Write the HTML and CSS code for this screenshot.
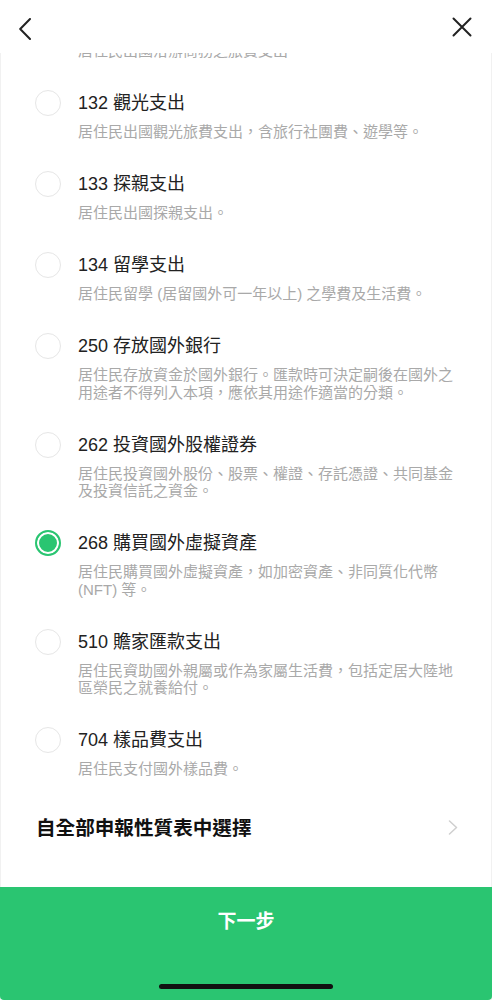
FILE: index.html
```html
<!DOCTYPE html>
<html lang="zh-Hant">
<head>
<meta charset="utf-8">
<title>申報性質</title>
<link rel="stylesheet" href="styles.css">
</head>
<body>
<div class="page">
  <header class="header">
    <svg class="icon-back" width="12" height="22" viewBox="0 0 12 22"><polyline points="11,1 1.2,11 11,21" fill="none" stroke="#222" stroke-width="2" stroke-linecap="round" stroke-linejoin="round"/></svg>
    <svg class="icon-close" width="20" height="20" viewBox="0 0 20 20"><path d="M1.5 1.5 L18.5 18.5 M18.5 1.5 L1.5 18.5" fill="none" stroke="#222" stroke-width="2" stroke-linecap="round"/></svg>
  </header>
  <main class="main">
    <div class="list">
      <p class="desc clipped">居住民出國洽辦商務之旅費支出</p>
      <div class="item">
        <span class="radio"></span>
        <div class="text">
          <div class="title">132 觀光支出</div>
          <p class="desc">居住民出國觀光旅費支出，含旅行社團費、遊學等。</p>
        </div>
      </div>
      <div class="item">
        <span class="radio"></span>
        <div class="text">
          <div class="title">133 探親支出</div>
          <p class="desc">居住民出國探親支出。</p>
        </div>
      </div>
      <div class="item">
        <span class="radio"></span>
        <div class="text">
          <div class="title">134 留學支出</div>
          <p class="desc">居住民留學 (居留國外可一年以上) 之學費及生活費。</p>
        </div>
      </div>
      <div class="item">
        <span class="radio"></span>
        <div class="text">
          <div class="title">250 存放國外銀行</div>
          <p class="desc">居住民存放資金於國外銀行。匯款時可決定嗣後在國外之用途者不得列入本項，應依其用途作適當的分類。</p>
        </div>
      </div>
      <div class="item">
        <span class="radio"></span>
        <div class="text">
          <div class="title">262 投資國外股權證券</div>
          <p class="desc">居住民投資國外股份、股票、權證、存託憑證、共同基金及投資信託之資金。</p>
        </div>
      </div>
      <div class="item">
        <span class="radio checked"></span>
        <div class="text">
          <div class="title">268 購買國外虛擬資產</div>
          <p class="desc">居住民購買國外虛擬資產，如加密資產、非同質化代幣 (NFT) 等。</p>
        </div>
      </div>
      <div class="item">
        <span class="radio"></span>
        <div class="text">
          <div class="title">510 贍家匯款支出</div>
          <p class="desc">居住民資助國外親屬或作為家屬生活費，包括定居大陸地區榮民之就養給付。</p>
        </div>
      </div>
      <div class="item">
        <span class="radio"></span>
        <div class="text">
          <div class="title">704 樣品費支出</div>
          <p class="desc">居住民支付國外樣品費。</p>
        </div>
      </div>
    </div>
    <div class="all-row">
      <span class="all-label">自全部申報性質表中選擇</span>
      <svg class="chev" width="10" height="15" viewBox="0 0 10 15"><polyline points="1.5,1 8.5,7.5 1.5,14" fill="none" stroke="#cfcfcf" stroke-width="1.5" stroke-linecap="round" stroke-linejoin="round"/></svg>
    </div>
  </main>
  <footer class="footer">
    <span class="next">下一步</span>
    <span class="home-bar"></span>
  </footer>
</div>
</body>
</html>
```
FILE: styles.css
```css
* { box-sizing: border-box; }
html, body { margin: 0; padding: 0; background: #fff; }
body {
  font-family: "Liberation Sans", "Noto Sans CJK TC", sans-serif;
  color: #222;
}
.page {
  width: 492px;
  height: 1000px;
  display: flex;
  flex-direction: column;
  overflow: hidden;
  background: #fff;
  box-shadow: inset 1px 0 0 #f1f1f1, inset -1px 0 0 #f1f1f1;
}
.header {
  height: 53px;
  flex: none;
  display: flex;
  justify-content: space-between;
  align-items: flex-start;
  padding: 18px 20px 0 19px;
  position: relative;
  z-index: 1;
  background: #fff;
}
.icon-close { margin-top: -1px; }
.main {
  flex: 1;
  overflow: hidden;
  display: flex;
  flex-direction: column;
}
.list {
  display: flex;
  flex-direction: column;
  gap: 31.5px;
}
.desc {
  margin: 0;
  font-size: 15px;
  line-height: 17.5px;
  color: #a9a9a9;
}
.clipped {
  margin-top: -11px;
  padding-left: 78px;
}
.item {
  display: flex;
  align-items: flex-start;
  padding-left: 35px;
  padding-right: 36px;
}
.radio {
  flex: none;
  width: 26px;
  height: 26px;
  border-radius: 50%;
  border: 1.5px solid #e6e6e6;
  margin-top: -1px;
  margin-right: 17px;
  background: #fff;
}
.radio.checked {
  border: 2px solid #2ac571;
  background: #2ac571;
  box-shadow: inset 0 0 0 2px #fff;
}
.text {
  flex: 1;
  display: flex;
  flex-direction: column;
  gap: 8px;
}
.title {
  font-size: 18px;
  line-height: 24px;
  color: #222;
}
.all-row {
  margin-top: 36px;
  display: flex;
  align-items: center;
  justify-content: space-between;
  padding: 0 34px 0 36px;
  height: 28px;
}
.all-label {
  font-size: 19.6px;
  font-weight: 700;
  line-height: 28px;
  color: #111;
}
.footer {
  flex: none;
  height: 113px;
  background: #2ac571;
  border-radius: 0 0 4px 4px;
  display: flex;
  flex-direction: column;
  align-items: center;
  justify-content: space-between;
  padding: 23px 0 11px;
}
.next {
  color: #fff;
  font-size: 19px;
  line-height: 24px;
  font-weight: 700;
}
.home-bar {
  width: 174px;
  height: 5px;
  border-radius: 3px;
  background: #111;
}
```
